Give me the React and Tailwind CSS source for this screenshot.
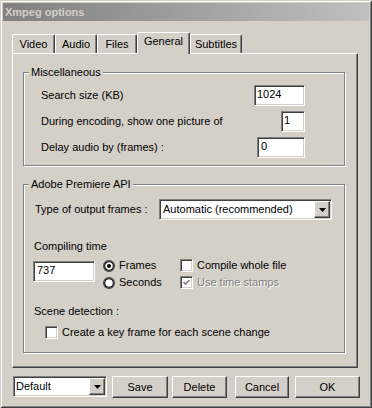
import React from "react";

const sunken =
  "bg-white border border-t-[#808080] border-l-[#808080] border-b-white border-r-white shadow-[inset_1px_1px_0_#404040,inset_-1px_-1px_0_#d4d0c8]";
const raised =
  "bg-[#d4d0c8] border border-t-white border-l-white border-b-[#404040] border-r-[#404040] shadow-[inset_-1px_-1px_0_#808080]";

const Arrow = () => (
  <svg width="7" height="4" viewBox="0 0 7 4">
    <polygon points="0,0 7,0 3.5,4" fill="#000" />
  </svg>
);

const DropButton = () => (
  <div className={`${raised} w-[16px] h-[17px] my-[1px] mr-[1px] flex items-center justify-center shrink-0`}>
    <Arrow />
  </div>
);

const Field = ({ width, value, pl = "pl-[2px]" }) => (
  <div className={`${sunken} ${width} h-[21px] ${pl} pt-[1px] leading-[14px]`}>{value}</div>
);

// classic round option button
const Radio = ({ checked }) => (
  <svg width="12" height="12" viewBox="0 0 12 12" className="shrink-0">
    <circle cx="6" cy="6" r="5.4" fill="#fff" stroke="#404040" strokeWidth="1.2" />
    <circle cx="6" cy="6" r="4.3" fill="#fff" stroke="#000" strokeWidth="1.1" />
    {checked && <circle cx="6" cy="6" r="2" fill="#000" />}
  </svg>
);

const Check = ({ checked, disabled }) => (
  <div
    className={`${sunken} ${disabled ? "bg-[#d4d0c8]" : ""} w-[13px] h-[13px] shrink-0 flex items-center justify-center`}
  >
    {checked && (
      <svg width="7" height="7" viewBox="0 0 7 7">
        <polyline points="0.5,3 2.5,5 6.5,1" fill="none" stroke={disabled ? "#808080" : "#000"} strokeWidth="1.6" />
      </svg>
    )}
  </div>
);

const Group = ({ title, className, children }) => (
  <div
    className={`relative border border-[#808080] shadow-[inset_1px_1px_0_#fff,1px_1px_0_#fff] ${className}`}
  >
    <span className="absolute left-[5px] top-[-7px] px-[2px] bg-[#d4d0c8] leading-[13px]">{title}</span>
    {children}
  </div>
);

const Tab = ({ label, width, active }) => (
  <div
    className={`${width} ${
      active ? "h-[22px] -mb-[1px] z-10 pt-[2px]" : "h-[19px] pt-[3px]"
    } relative bg-[#d4d0c8] border-t border-l border-white border-r border-r-[#404040] shadow-[inset_-1px_0_0_#808080] rounded-tl-[2px] rounded-tr-[2px] text-center leading-[13px]`}
  >
    {label}
  </div>
);

const Button = ({ label, width, ml }) => (
  <div className={`${raised} ${width} ${ml} h-[22px] flex items-center justify-center`}>{label}</div>
);

export default function App() {
  return (
    <div className="w-[372px] h-[408px] bg-[#d4d0c8] p-[3px] shadow-[inset_1px_1px_0_#d4d0c8,inset_-1px_-1px_0_#404040,inset_2px_2px_0_#fff,inset_-2px_-2px_0_#808080] font-['Liberation_Sans',Arial,sans-serif] text-[11px] text-black">
      <div className="h-[18px] bg-gradient-to-r from-[#808080] to-[#c0c0c0] flex items-center pl-[2px] text-[#d4d0c8] font-bold">
        Xmpeg options
      </div>

      <div className="ml-[9px] mt-[11px] h-[21px] flex items-end">
        <Tab label="Video" width="w-[43px]" />
        <Tab label="Audio" width="w-[42px]" />
        <Tab label="Files" width="w-[40px]" />
        <Tab label="General" width="w-[53px]" active />
        <Tab label="Subtitles" width="w-[52px]" />
      </div>

      <div className="ml-[9px] w-[346px] h-[315px] border border-t-white border-l-white border-r-[#404040] border-b-[#404040] shadow-[inset_-1px_-1px_0_#808080] pl-[10px] pt-[18px]">
        <Group title="Miscellaneous" className="w-[322px] h-[94px] pl-[17px] pr-[39px] pt-[12px]">
          <div className="flex flex-col gap-[5px]">
            <div className="h-[21px] flex items-center justify-between">
              <span>Search size (KB)</span>
              <Field width="w-[51px]" value="1024" />
            </div>
            <div className="h-[21px] flex items-center justify-between">
              <span>During encoding, show one picture of</span>
              <Field width="w-[24px]" value="1" />
            </div>
            <div className="h-[21px] flex items-center justify-between">
              <span>Delay audio by (frames) :</span>
              <Field width="w-[48px]" value="0" pl="pl-[3px]" />
            </div>
          </div>
        </Group>

        <Group title="Adobe Premiere API" className="w-[322px] mt-[18px] pl-[10px] pt-[14px] pb-[13px]">
          <div className="flex items-center h-[21px]">
            <span className="ml-[1px] w-[124px]">Type of output frames :</span>
            <div className={`${sunken} w-[173px] h-[21px] flex items-start`}>
              <span className="flex-1 pl-[3px] leading-[19px]">Automatic (recommended)</span>
              <DropButton />
            </div>
          </div>

          <div className="mt-[20px] leading-[13px]">Compiling time</div>
          <div className="flex mt-[4px]">
            <div className="ml-[-1px] mt-[4px]">
              <Field width="w-[62px]" value="737" pl="pl-[3px]" />
            </div>
            <div className="ml-[8px] w-[77px] flex flex-col">
              <div className="h-[17px] flex items-center">
                <Radio checked />
                <span className="ml-[4px]">Frames</span>
              </div>
              <div className="h-[17px] flex items-center">
                <Radio />
                <span className="ml-[4px]">Seconds</span>
              </div>
            </div>
            <div className="flex flex-col">
              <div className="h-[17px] flex items-center">
                <Check />
                <span className="ml-[4px]">Compile whole file</span>
              </div>
              <div className="h-[17px] flex items-center">
                <Check checked disabled />
                <span className="ml-[4px] text-[#808080] [text-shadow:1px_1px_0_#fff]">Use time stamps</span>
              </div>
            </div>
          </div>

          <div className="mt-[14px] leading-[13px]">Scene detection :</div>
          <div className="mt-[8px] ml-[11px] h-[13px] flex items-center">
            <Check />
            <span className="ml-[4px]">Create a key frame for each scene change</span>
          </div>
        </Group>
      </div>

      <div className="mt-[8px] ml-[10px] flex items-start">
        <div className={`${sunken} w-[94px] h-[21px] flex items-start`}>
          <span className="flex-1 pl-[2px] leading-[19px]">Default</span>
          <DropButton />
        </div>
        <Button label="Save" width="w-[56px]" ml="ml-[5px]" />
        <Button label="Delete" width="w-[55px]" ml="ml-[4px]" />
        <Button label="Cancel" width="w-[54px]" ml="ml-[8px]" />
        <Button label="OK" width="w-[65px]" ml="ml-[6px]" />
      </div>
    </div>
  );
}
